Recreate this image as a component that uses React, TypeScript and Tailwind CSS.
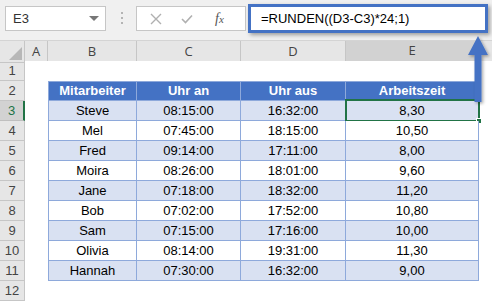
import React from 'react';

const daten = [
  ['Steve', '08:15:00', '16:32:00', '8,30'],
  ['Mel', '07:45:00', '18:15:00', '10,50'],
  ['Fred', '09:14:00', '17:11:00', '8,00'],
  ['Moira', '08:26:00', '18:01:00', '9,60'],
  ['Jane', '07:18:00', '18:32:00', '11,20'],
  ['Bob', '07:02:00', '17:52:00', '10,80'],
  ['Sam', '07:15:00', '17:16:00', '10,00'],
  ['Olivia', '08:14:00', '19:31:00', '11,30'],
  ['Hannah', '07:30:00', '16:32:00', '9,00'],
];

const gridCols = 'grid grid-cols-[25px_23px_89px_104px_105px_133px_1fr]';

const ZeilenKopf = ({ n, aktiv = false }: { n: number; aktiv?: boolean }) => (
  <div
    className={
      aktiv
        ? 'h-5 flex items-center justify-center bg-[#d2d2d2] text-[#217346] border-b border-[#bfbfbf] border-r-2 border-r-[#217346] text-[13px]'
        : 'h-5 flex items-center justify-center bg-[#e6e6e6] text-[#444] border-b border-r border-[#c6c6c6] text-[13px]'
    }
  >
    {n}
  </div>
);

const Leer = () => <div className="h-5 bg-white" />;

export default function App() {
  return (
    <div className="relative w-[492px] h-[302px] overflow-hidden bg-white font-['Liberation_Sans',sans-serif] text-black">
      {/* Formelleiste */}
      <div className="h-10 bg-[#f0f0f0] flex items-start pt-[4px] pl-[5px]">
        <div className="mt-[2px] w-[101px] h-[25px] bg-white border border-[#c6c6c6] flex items-center justify-between pl-[7px] pr-[6px] text-[13px] text-[#333]">
          <span>E3</span>
          <span className="w-0 h-0 border-l-[5px] border-r-[5px] border-t-[5px] border-l-transparent border-r-transparent border-t-[#777]" />
        </div>
        <div className="mt-[8px] ml-[15px] flex flex-col gap-[3px]">
          <span className="w-[2px] h-[2px] bg-[#b4b4b4]" />
          <span className="w-[2px] h-[2px] bg-[#b4b4b4]" />
          <span className="w-[2px] h-[2px] bg-[#b4b4b4]" />
        </div>
        <div className="mt-[2px] ml-[13px] w-[110px] h-[25px] bg-white border border-[#c6c6c6] flex items-center">
          <svg className="ml-[13px]" width="12" height="12" viewBox="0 0 12 12">
            <path d="M1 1 L11 11 M11 1 L1 11" stroke="#b0b0b0" strokeWidth="1.4" fill="none" />
          </svg>
          <svg className="ml-[19px]" width="12" height="10" viewBox="0 0 12 10">
            <path d="M1 5 L4.5 8.5 L11 1.5" stroke="#b0b0b0" strokeWidth="1.6" fill="none" />
          </svg>
          <span className="ml-[22px] font-['Liberation_Serif',serif] italic text-[14px] text-[#555] leading-none">
            f<span className="text-[11px]">x</span>
          </span>
        </div>
        <div className="ml-[2px] w-[240px] h-[29px] bg-white border-[3px] border-[#4472c4] shadow-[2px_2px_4px_rgba(0,0,0,0.35)] flex items-center pl-[10px] text-[13px]">
          =RUNDEN((D3-C3)*24;1)
        </div>
      </div>

      {/* Spaltenköpfe */}
      <div className={`${gridCols} h-[21px] bg-[#e6e6e6] border-t border-[#d4d4d4] text-[13px] text-[#444] font-['Open_Sans',sans-serif]`}>
        <div className="relative border-r border-b border-[#c6c6c6]">
          <svg className="absolute right-[2px] bottom-[2px]" width="13" height="13" viewBox="0 0 13 13">
            <path d="M13 0 L13 13 L0 13 Z" fill="#b7b7b7" />
          </svg>
        </div>
        {['A', 'B', 'C', 'D'].map((b) => (
          <div key={b} className="flex items-center justify-center border-r border-b border-[#c6c6c6]">
            {b}
          </div>
        ))}
        <div className="flex items-center justify-center bg-[#d2d2d2] border-r border-[#c6c6c6] border-b-2 border-b-[#217346]">
          E
        </div>
        <div className="border-b border-[#c6c6c6]" />
      </div>

      {/* Tabelle */}
      <div className={`${gridCols} text-[13px]`}>
        <ZeilenKopf n={1} />
        <Leer /><Leer /><Leer /><Leer /><Leer /><Leer />

        <ZeilenKopf n={2} />
        <Leer />
        {['Mitarbeiter', 'Uhr an', 'Uhr aus', 'Arbeitszeit'].map((t, i) => (
          <div
            key={t}
            className={`h-5 flex items-center justify-center bg-[#4472c4] text-white font-bold border-t border-r border-b border-[#8ea9db] ${i === 0 ? 'border-l' : ''}`}
          >
            {t}
          </div>
        ))}
        <Leer />

        {daten.map((z, r) => {
          const bg = r % 2 === 0 ? 'bg-[#d9e1f2]' : 'bg-white';
          return (
            <React.Fragment key={z[0]}>
              <ZeilenKopf n={r + 3} aktiv={r === 0} />
              <Leer />
              {z.map((w, i) => (
                <div
                  key={i}
                  className={`relative h-5 flex items-center justify-center ${bg} border-r border-b border-[#8ea9db] ${i === 0 ? 'border-l' : ''}`}
                >
                  {w}
                  {r === 0 && i === 3 && (
                    <>
                      <span className="absolute -left-[1px] -top-[2px] -right-[2px] -bottom-[2px] border-2 border-[#217346]" />
                      <span className="absolute -right-[4px] -bottom-[4px] w-[6px] h-[6px] bg-[#217346] border border-white" />
                    </>
                  )}
                </div>
              ))}
              <Leer />
            </React.Fragment>
          );
        })}

        <ZeilenKopf n={12} />
        <Leer /><Leer /><Leer /><Leer /><Leer /><Leer />
      </div>

      {/* Pfeil */}
      <svg className="absolute left-[464px] top-[34px]" width="28" height="72" viewBox="0 0 28 72">
        <defs>
          <filter id="schatten" x="-50%" y="-20%" width="200%" height="140%">
            <feDropShadow dx="1.5" dy="1.5" stdDeviation="1.5" floodColor="#000" floodOpacity="0.35" />
          </filter>
        </defs>
        <path d="M14 2 L24 21 L17.5 21 L17.5 68 L10.5 68 L10.5 21 L4 21 Z" fill="#4472c4" filter="url(#schatten)" />
      </svg>
    </div>
  );
}
